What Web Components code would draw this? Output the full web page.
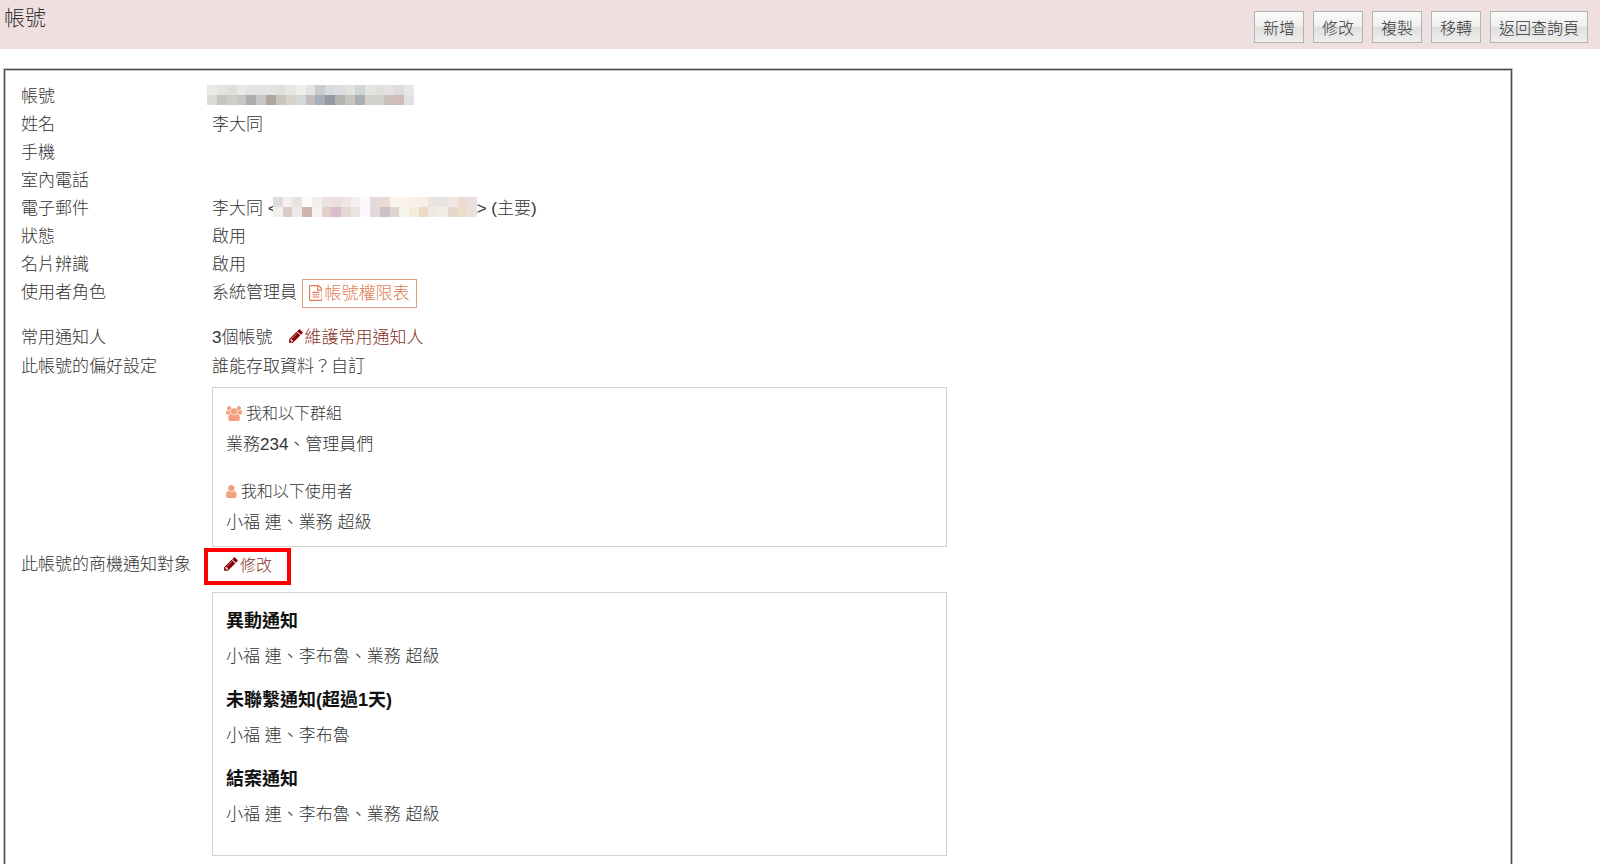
<!DOCTYPE html>
<html lang="zh-Hant">
<head>
<meta charset="utf-8">
<title>帳號</title>
<style>
  body {
    margin: 0;
    min-height: 100vh;
    display: flex;
    flex-direction: column;
    background: #fff;
    color: #333;
    font: 300 17px/28px "Liberation Sans", "Noto Sans CJK TC", sans-serif;
  }
  account-panel { flex: 1; }
</style>
</head>
<body>
<page-header heading="帳號">
  <tool-button>新增</tool-button>
  <tool-button>修改</tool-button>
  <tool-button>複製</tool-button>
  <tool-button>移轉</tool-button>
  <tool-button>返回查詢頁</tool-button>
</page-header>
<account-panel>
  <detail-row label="帳號"><masked-value outdent
    top="e9eae5 e4e4df dededd e8e8e8 e2e2e3 e2e2e2 e3e3e3 dfdfdd e7e6e0 edefec e4e4e2 c8cccd d9dbdd dedee2 e2e2df d0d5d6 e4e4e0 dfdfdd e2e2e2 dfdbdd e7e7e7"
    bottom="dbdcd3 c4c6c1 cfcfca c2c8c7 adadaf c6c6c7 aea79f cbc4bb d7d4ca d4d9dc c2bebb a7afba 9699a3 b3b4b4 c7c4c0 a9aeb2 d1d0ca d1d1ce cbc0b9 d1bbb9 e0e0e0"></masked-value></detail-row>
  <detail-row label="姓名">李大同</detail-row>
  <detail-row label="手機"></detail-row>
  <detail-row label="室內電話"></detail-row>
  <detail-row label="電子郵件">李大同 &lt;<masked-value
    top="dedcda f8eeef e9e3e1 fcfdf9 f0edea e9e3df ecdfdf efe5e3 f5f0ed fbf9fa e5dadd eadbd3 faf4f0 fcf3ee fcf1e8 faefe4 e8e5e0 e8e3e3 f1e6e6 ecdcd0 e6dfdf"
    bottom="f0f0ed d9cbc8 edebea cfb4aa f6f2ed e5cec7 d8bdca e4d6d5 eae3df fbf9fb e3d7dd cbc0c4 ded6cc f5f7ed f4ecdc ebdcc8 efeae2 f1ede7 e3d9cf ebddc8 e8e3df"></masked-value>&gt; (主要)</detail-row>
  <detail-row label="狀態">啟用</detail-row>
  <detail-row label="名片辨識">啟用</detail-row>
  <detail-row label="使用者角色">系統管理員 <outline-button>帳號權限表</outline-button></detail-row>
  <detail-row label="常用通知人" spaced>3個帳號<edit-link>維護常用通知人</edit-link></detail-row>
  <detail-row label="此帳號的偏好設定">誰能存取資料？自訂<access-card slot="card"></access-card></detail-row>
  <detail-row label="此帳號的商機通知對象" tall><edit-link marked>修改</edit-link><notify-card slot="card"></notify-card></detail-row>
</account-panel>

<script>
const ICONS = {
  pencil: ['0 0 1792 1792', 'M491 1536l91-91-235-235-91 91v107h128v128h107zm523-928q0-22-22-22-10 0-17 7l-542 542q-7 7-7 17 0 22 22 22 10 0 17-7l542-542q7-7 7-17zm-54-192l416 416-832 832h-416v-416zm683 96q0 53-37 90l-166 166-416-416 166-165q36-38 90-38 53 0 91 38l235 234q37 39 37 91z'],
  file: ['128 0 1536 1792', 'M1596 380q28 28 48 76t20 88v1152q0 40-28 68t-68 28h-1344q-40 0-68-28t-28-68v-1600q0-40 28-68t68-28h896q40 0 88 20t76 48zm-444-244v376h376q-10-29-22-41l-313-313q-12-12-41-22zm384 1528v-1024h-416q-40 0-68-28t-28-68v-416h-768v1536h1280zm-1024-864q0-14 9-23t23-9h704q14 0 23 9t9 23v64q0 14-9 23t-23 9h-704q-14 0-23-9t-9-23v-64zm736 224q14 0 23 9t9 23v64q0 14-9 23t-23 9h-704q-14 0-23-9t-9-23v-64q0-14 9-23t23-9h704zm0 256q14 0 23 9t9 23v64q0 14-9 23t-23 9h-704q-14 0-23-9t-9-23v-64q0-14 9-23t23-9h704z'],
  user: ['256 0 1280 1792', 'M1536 1399q0 109-62.5 187t-150.5 78h-854q-88 0-150.5-78t-62.5-187q0-85 8.5-160.5t31.5-152 58.5-131 94-89 134.5-34.5q131 128 313 128t313-128q76 0 134.5 34.5t94 89 58.5 131 31.5 152 8.5 160.5zm-256-887q0 159-112.5 271.5t-271.5 112.5-271.5-112.5-112.5-271.5 112.5-271.5 271.5-112.5 271.5 112.5 112.5 271.5z'],
  users: ['-64 0 1920 1792', 'M529 896q-162 5-265 128h-134q-82 0-138-40.5t-56-118.5q0-353 124-353 6 0 43.5 21t97.5 42.5 119 21.5q67 0 133-23-5 37-5 66 0 159 93 290zm1071 637q0 120-73 189.5t-194 69.5h-874q-121 0-194-69.5t-73-189.5q0-53 3.5-103.5t14-109 26.5-108.5 43-97.5 62-81 85.5-53.5 111.5-20q10 0 43 21.5t73 48 107 48 135 21.5 135-21.5 107-48 73-48 43-21.5q61 0 111.5 20t85.5 53.5 62 81 43 97.5 26.5 108.5 14 109 3.5 103.5zm-1024-1277q0 106-75 181t-181 75-181-75-75-181 75-181 181-75 181 75 75 181zm704 384q0 159-112.5 271.5t-271.5 112.5-271.5-112.5-112.5-271.5 112.5-271.5 271.5-112.5 271.5 112.5 112.5 271.5zm576 225q0 78-56 118.5t-138 40.5h-134q-103-123-265-128 93-131 93-290 0-29-5-66 66 23 133 23 59 0 119-21.5t97.5-42.5 43.5-21q124 0 124 353zm-128-609q0 106-75 181t-181 75-181-75-75-181 75-181 181-75 181 75 75 181z']
};

function define(name, html) {
  customElements.define(name, class extends HTMLElement {
    connectedCallback() {
      if (this.shadowRoot) return;
      this.attachShadow({ mode: 'open' }).innerHTML = typeof html === 'function' ? html(this) : html;
    }
  });
}

define('ui-icon', el => {
  const [box, d] = ICONS[el.getAttribute('name')];
  return `<style>
    :host { display: inline-block; height: 16px; line-height: 0; }
    svg { height: 100%; fill: currentColor; }
  </style><svg viewBox="${box}" aria-hidden="true"><path d="${d}"/></svg>`;
});

define('page-header', el => `<style>
    :host { display: block; background: #efdfdf; }
    header { display: flex; justify-content: space-between; height: 49px; padding: 0 12px 0 4px; box-sizing: border-box; }
    h1 { margin: 0; font-size: 21px; line-height: 36px; font-weight: inherit; }
    nav { display: flex; gap: 9px; padding-top: 11px; }
  </style>
  <header><h1>${el.getAttribute('heading')}</h1><nav><slot></slot></nav></header>`);

define('tool-button', `<style>
    :host { display: block; }
    button {
      height: 32px; padding: 3px 8px 0; border: 1px solid #b3b3b3; font: inherit; font-size: 16px; color: #333;
      background: linear-gradient(#fafafa, #efefef 48%, #dfdfdf 50%, #efefef);
    }
  </style><button type="button"><slot></slot></button>`);

define('account-panel', `<style>
    :host {
      display: block; margin: 20px 88px 0 4px; padding: 13px 16px 8px;
      border: 1px solid #484848; border-bottom: 0;
      box-shadow: 0 0 0 1px #c4c4c4, inset 0 1px #c4c4c4, inset 1px 0 #c4c4c4, inset -1px 0 #c4c4c4;
    }
    dl { margin: 0; }
  </style><dl><slot></slot></dl>`);

define('detail-row', el => `<style>
    :host { display: grid; grid-template-columns: 191px 1fr; }
    :host([spaced]) { margin-top: 17px; margin-bottom: 1px; }
    dt, dd { margin: 0; }
    dd { min-height: 28px; }
    .value { display: flex; align-items: center; height: 28px; white-space: pre; }
    :host([tall]) dt { line-height: 35px; }
    :host([tall]) .value { height: 38px; }
  </style>
  <dt>${el.getAttribute('label')}</dt>
  <dd><div class="value"><slot></slot></div><slot name="card"></slot></dd>`);

define('masked-value', el => {
  const row = (name, y) => el.getAttribute(name).split(' ')
    .map((c, i) => `<rect x="${i}" y="${y}" width="1" height="1" fill="#${c}"/>`).join('');
  return `<style>
    :host { display: block; width: 204px; height: 20px; margin: 0 0 4px -5px; }
    :host([outdent]) { width: 207px; }
    svg { display: block; width: 100%; height: 100%; }
  </style><svg viewBox="0 0 21 2" preserveAspectRatio="none" shape-rendering="crispEdges" role="img" aria-label="masked">${row('top', 0)}${row('bottom', 1)}</svg>`;
});

define('outline-button', `<style>
    :host { display: block; }
    button {
      display: flex; align-items: center; gap: 2px; height: 29px; padding: 2px 7px 0 6px;
      border: 1px solid #e0a080; background: #fff; color: #dc7d50; font: inherit;
    }
    ui-icon { color: #e87858; margin-bottom: 2px; }
  </style><button type="button"><ui-icon name="file"></ui-icon><slot></slot></button>`);

define('edit-link', `<style>
    :host { display: block; margin-left: 16px; }
    a { display: flex; align-items: center; color: #85301f; text-decoration: none; }
    ui-icon { color: #8b0000; margin-bottom: 4px; }
    :host([marked]) { margin-left: -8px; border: 4px solid #f00; }
    :host([marked]) a { height: 29px; padding: 0 15px; gap: 1px; font-size: 16px; }
  </style><a href="#edit"><ui-icon name="pencil"></ui-icon><slot></slot></a>`);

const CARD = `
    :host { display: block; max-width: 735px; box-sizing: border-box; border: 1px solid #d3d3d3; white-space: normal; }
    h3, p { margin: 0; }`;

define('access-card', `<style>${CARD}
    :host { margin-top: 6px; padding: 10px 13px 8px; line-height: 31px; }
    h3 { display: flex; align-items: center; gap: 4px; font-size: 16px; font-weight: inherit; }
    section + section { margin-top: 16px; }
    ui-icon { color: #f4a07e; height: 15px; }
  </style>
  <section><h3><ui-icon name="users"></ui-icon>我和以下群組</h3><p>業務234、管理員們</p></section>
  <section><h3><ui-icon name="user"></ui-icon>我和以下使用者</h3><p>小福 連、業務 超級</p></section>`);

define('notify-card', `<style>${CARD}
    :host { margin-top: 7px; padding: 10px 13px 15px; }
    h3 { font-size: 18px; line-height: 36px; color: #111; }
    p { line-height: 36px; }
    section { margin-bottom: 7px; }
  </style>
  <section><h3>異動通知</h3><p>小福 連、李布魯、業務 超級</p></section>
  <section><h3>未聯繫通知(超過1天)</h3><p>小福 連、李布魯</p></section>
  <section><h3>結案通知</h3><p>小福 連、李布魯、業務 超級</p></section>`);
</script>
</body>
</html>
